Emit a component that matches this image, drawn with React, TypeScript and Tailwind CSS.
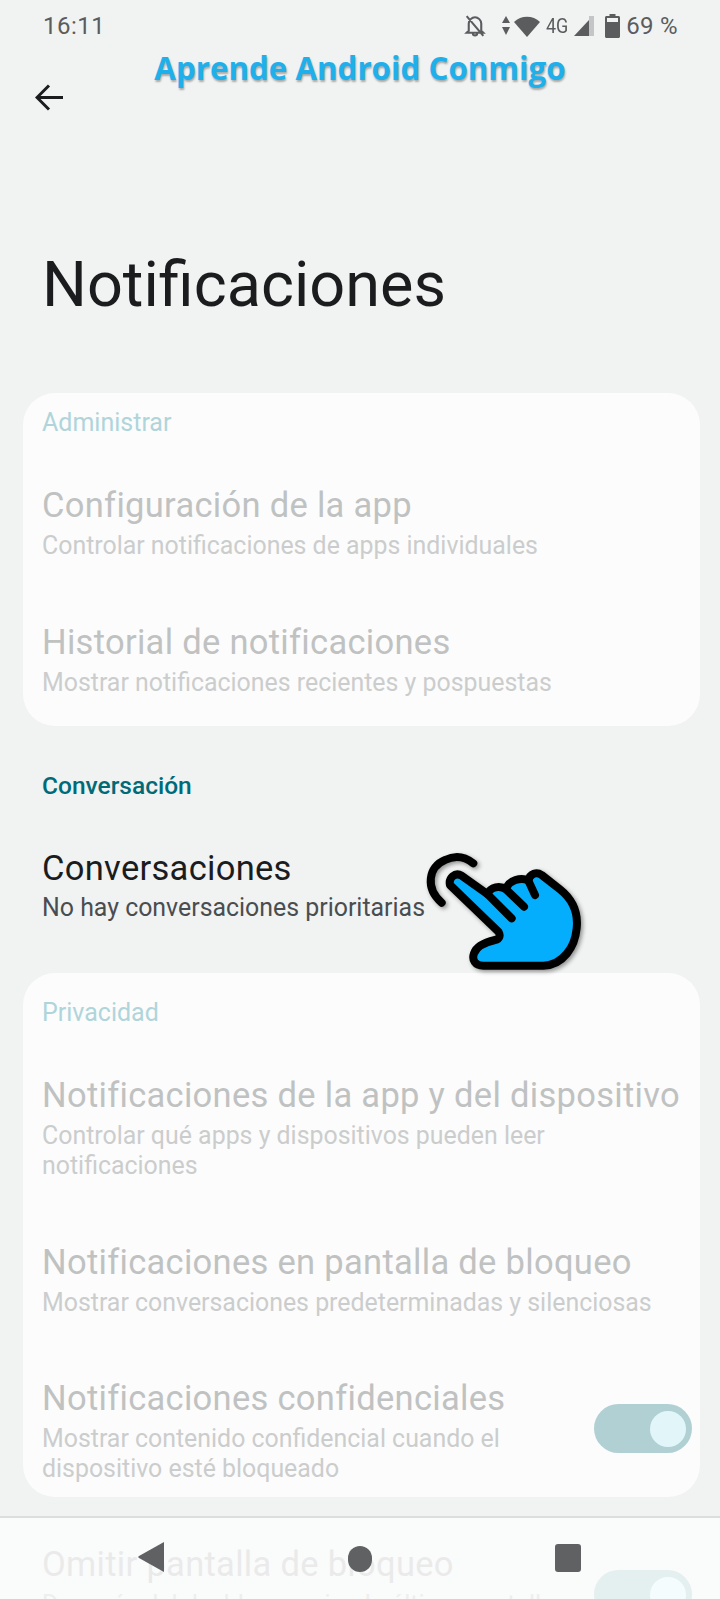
import React from "react";

function Row({ title, sub, toggle, className = "" }: { title: string; sub: React.ReactNode; toggle?: boolean; className?: string }) {
  return (
    <div className={`flex items-center ${className}`}>
      <div className="flex-1 min-w-0">
        <div className="text-[34.5px] leading-[40px] tracking-[0.3px] text-[#c0c2c2] whitespace-nowrap">{title}</div>
        <div className="text-[24.9px] leading-[30px] mt-[6px] text-[#cbcdcd] whitespace-nowrap">{sub}</div>
      </div>
      {toggle && <Toggle />}
    </div>
  );
}

function Toggle() {
  return (
    <div className="w-[98px] h-[49px] mb-[5px] shrink-0 rounded-full flex items-center justify-end pr-[6px] bg-[#b1d0d4]">
      <div className="w-[36px] h-[36px] rounded-full bg-[#e2f6fa]" />
    </div>
  );
}

function Hand() {
  return (
    <svg width="200" height="150" viewBox="0 0 600 450" className="absolute left-[400px] top-[830px] drop-shadow-[2px_2px_2px_rgba(0,0,0,0.4)]">
      <path d="M125 218C75 175 85 110 135 90C165 75 195 80 220 100" fill="none" stroke="#000" strokeWidth="24" strokeLinecap="round" />
      <path
        d="M150 165C145 145 165 125 185 137L262 192C272 170 300 165 318 178C325 150 365 140 385 152C390 130 410 125 425 135L480 178C520 210 535 250 530 295C525 350 490 405 430 407L250 407C225 407 215 390 222 370C230 347 255 337 285 330C300 327 302 315 295 305Z"
        fill="#05aefc"
        stroke="#000"
        strokeWidth="24"
        strokeLinejoin="round"
      />
      <path d="M262 192L335 265M318 178L372 230M385 152L405 195" fill="none" stroke="#000" strokeWidth="24" strokeLinecap="round" />
    </svg>
  );
}

export default function App() {
  return (
    <div style={{ fontFamily: "Roboto, sans-serif" }} className="relative w-[720px] h-[1599px] overflow-hidden bg-[#f1f2f2]">
      {/* status bar */}
      <div className="flex items-center justify-between pl-[43px] pr-[42px] pt-[11px] h-[40px] text-[#5a5c5e] text-[24px] leading-[28px]">
        <span className="tracking-[0.5px]">16:11</span>
        <div className="flex items-center">
          <svg width="24" height="25" viewBox="0 0 22 24" fill="none" stroke="#5a5c5e" strokeWidth="2">
            <path d="M5 17V10C5 7 8 4 11 4C14 4 17 7 17 10V17L19 19H3ZM9 20C9 22 13 22 13 20M3 3L19 22" />
          </svg>
          <svg width="12" height="22" viewBox="0 0 12 22" fill="#5a5c5e" className="ml-[13px]">
            <path d="M6 1L10 8H2ZM6 20L2 12H10Z" />
          </svg>
          <svg width="28" height="24" viewBox="0 0 28 24" fill="#5a5c5e" className="ml-[1px]">
            <path d="M1 8C8 1 20 1 27 8L14 23Z" />
          </svg>
          <span className="text-[18px] leading-none ml-[5px] scale-y-110">4G</span>
          <svg width="22" height="22" viewBox="0 0 22 22" fill="#5a5c5e" className="ml-[5px]">
            <path d="M1 21L16 5V21Z" />
            <path d="M16 1L21 1V21H16Z" fill="#c3c5c6" />
          </svg>
          <svg width="15" height="24" viewBox="0 0 15 24" fill="#5a5c5e" className="ml-[10px]">
            <path d="M4.5 0H10.5V2H13.5C14.3 2 15 2.7 15 3.5V22.5C15 23.3 14.3 24 13.5 24H1.5C.7 24 0 23.3 0 22.5V3.5C0 2.7 .7 2 1.5 2H4.5Z" />
            <rect x="2" y="4" width="11" height="4" fill="#f1f2f2" />
          </svg>
          <span className="ml-[6px] tracking-[0.3px]">69 %</span>
        </div>
      </div>
      {/* watermark */}
      <div
        style={{ fontFamily: "'Open Sans', sans-serif" }}
        className="text-center text-[31.3px] leading-[36px] font-bold text-[#1fb0ec] mt-[10px] [text-shadow:1px_2px_2px_rgba(0,0,0,0.3)]"
      >
        Aprende Android Conmigo
      </div>
      {/* back */}
      <div className="pl-[35px] mt-[-2px]">
        <svg width="29" height="27" viewBox="0 0 29 27" fill="none" stroke="#1a1c1e" strokeWidth="3" className="block">
          <path d="M28 13.5H2M14 1.5L2 13.5L14 25.5" />
        </svg>
      </div>
      <h1 className="pl-[42px] mt-[138px] text-[63px] leading-[72px] text-[#1a1c1e]">Notificaciones</h1>

      {/* card 1 */}
      <div className="ml-[23px] mr-[20px] mt-[72px] h-[333px] rounded-[32px] bg-[#fcfcfc] pt-[17px]">
        <div className="pl-[19px] text-[25px] leading-[26px] text-[#afd5db]">Administrar</div>
        <Row className="mt-[49px] pl-[19px] pr-2" title="Configuración de la app" sub="Controlar notificaciones de apps individuales" />
        <Row className="mt-[61px] pl-[19px] pr-2" title="Historial de notificaciones" sub="Mostrar notificaciones recientes y pospuestas" />
      </div>

      {/* conversation */}
      <div className="pl-[42px] mt-[47px] text-[24.5px] leading-[26px] font-medium text-[#006a77]">Conversación</div>
      <div className="pl-[42px] mt-[49px] text-[34.5px] leading-[40px] tracking-[0.3px] text-[#1a1c1e]">Conversaciones</div>
      <div className="pl-[42px] mt-[5px] text-[24.9px] leading-[30px] text-[#4a4d50]">No hay conversaciones prioritarias</div>

      {/* card 2 */}
      <div className="ml-[23px] mr-[20px] mt-[50px] h-[524px] rounded-[32px] bg-[#fcfcfc] pt-[27px]">
        <div className="pl-[19px] text-[25px] leading-[26px] text-[#afd5db]">Privacidad</div>
        <Row className="mt-[49px] pl-[19px] pr-2" title="Notificaciones de la app y del dispositivo" sub={<>Controlar qué apps y dispositivos pueden leer<br />notificaciones</>} />
        <Row className="mt-[61px] pl-[19px] pr-2" title="Notificaciones en pantalla de bloqueo" sub="Mostrar conversaciones predeterminadas y silenciosas" />
        <Row className="mt-[60px] pl-[19px] pr-2" toggle title="Notificaciones confidenciales" sub={<>Mostrar contenido confidencial cuando el<br />dispositivo esté bloqueado</>} />
      </div>

      <Row className="mt-[47px] pl-[42px] pr-[28px]" toggle title="Omitir pantalla de bloqueo" sub={<>Después del desbloqueo, ir a la última pantalla<br />usada</>} />

      <Hand />

      {/* nav bar */}
      <div className="absolute left-0 right-0 top-[1516px] h-[83px] bg-[#ffffff]/[0.66] border-t-2 border-[#dcdddd]">
        <svg width="26" height="30" viewBox="0 0 26 30" fill="#5f6163" className="absolute left-[138px] top-[24px]">
          <path d="M26 0V30L1 16C0 15.4 0 14.6 1 14Z" />
        </svg>
        <div className="absolute left-[348px] top-[28px] w-[24px] h-[26px] rounded-full bg-[#5f6163]" />
        <div className="absolute left-[555px] top-[26px] w-[26px] h-[28px] rounded-[3px] bg-[#5f6163]" />
      </div>
    </div>
  );
}
